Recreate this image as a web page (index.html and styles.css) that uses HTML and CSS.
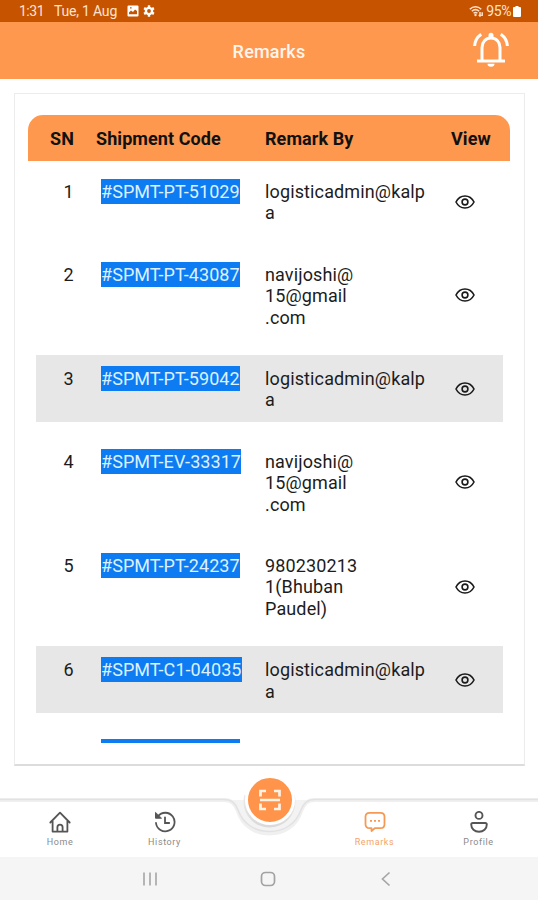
FILE: index.html
```html
<!DOCTYPE html>
<html lang="en">

<head>
    <meta charset="UTF-8">
    <title>Remarks</title>
    <link rel="stylesheet" href="styles.css">
</head>

<body>
    <div class="status-bar">
        <span class="time">1:31</span>
        <span class="date">Tue, 1 Aug</span>
        <svg class="status-picture" width="12" height="12" viewBox="0 0 12 12">
            <path fill="#fff" fill-rule="evenodd" d="M1.5 0.5h9a1 1 0 0 1 1 1v9a1 1 0 0 1-1 1h-9a1 1 0 0 1-1-1v-9a1 1 0 0 1 1-1zM2 9.2h8V6L8 4.6 6 7 4 5.6 2 7.4zM3 2.2v1.4h1.6V2.2z"/>
        </svg>
        <svg class="status-gear" width="12" height="12" viewBox="0 0 12 12">
            <circle cx="6" cy="6" r="3.1" fill="none" stroke="#fff" stroke-width="2.4"/>
            <path stroke="#fff" stroke-width="2.4" d="M6 .3v2M6 9.7v2M1.1 3.1l1.7 1M9.2 7.9l1.7 1M1.1 8.9l1.7-1M9.2 4.1l1.7-1"/>
        </svg>
        <svg class="status-wifi" width="15" height="12" viewBox="0 0 15 12">
            <g fill="none" stroke="#ffe0c8" stroke-width="1.5">
                <path d="M.8 4.2C4 1 9 1 12.2 4.2M2.8 6.3c2.2-2 5.2-2 7.4 0M4.6 8.3c1.1-1 2.7-1 3.8 0"/>
                <path d="M11 7v4M9.8 9.8L11 11l1.2-1.2M13.2 11V7.2"/>
            </g>
            <circle cx="6.5" cy="10" r="1.2" fill="#ffe0c8"/>
        </svg>
        <span class="battery-text">95%</span>
        <svg class="battery" width="8" height="11" viewBox="0 0 8 11">
            <path fill="#fff" d="M2.5 0h3v1H7a1 1 0 0 1 1 1v8a1 1 0 0 1-1 1H1a1 1 0 0 1-1-1V2a1 1 0 0 1 1-1h1.500z"/>
        </svg>
    </div>

    <div class="header">
        <h1>Remarks</h1>
        <svg class="bell" width="38" height="38" viewBox="0 0 38 38">
            <g fill="none" stroke="#fff" stroke-width="3">
                <path d="M10 29V16.500c0-5.500 3.700-9.500 9-9.500s9 4 9 9.500V29"/>
                <path d="M5 30h28" stroke-width="3"/>
                <path d="M2.600 15C3 9.500 5.300 6 9.200 3.300M35.400 15C35 9.500 32.700 6 28.800 3.300" stroke-width="3"/>
            </g>
            <path fill="#fff" d="M16.500 7.500V4.200a2.500 2.500 0 0 1 5 0v3.300zM15.500 32.800h7a3.500 3 0 0 1-7 0z"/>
        </svg>
    </div>

    <div class="card">
        <div class="row table-head">
            <span>SN</span>
            <span>Shipment Code</span>
            <span>Remark By</span>
            <span>View</span>
        </div>
        <div class="table-body">
            <div class="row">
                <span class="sn">1</span>
                <span class="code"><mark>#SPMT-PT-51029</mark></span>
                <span class="by">logisticadmin@kalp<br>a</span>
                <svg class="eye" viewBox="0 0 20 16"><use href="#eye"/></svg>
            </div>
            <div class="row">
                <span class="sn">2</span>
                <span class="code"><mark>#SPMT-PT-43087</mark></span>
                <span class="by">navijoshi@<br>15@gmail<br>.com</span>
                <svg class="eye" viewBox="0 0 20 16"><use href="#eye"/></svg>
            </div>
            <div class="row shaded">
                <span class="sn">3</span>
                <span class="code"><mark>#SPMT-PT-59042</mark></span>
                <span class="by">logisticadmin@kalp<br>a</span>
                <svg class="eye" viewBox="0 0 20 16"><use href="#eye"/></svg>
            </div>
            <div class="row">
                <span class="sn">4</span>
                <span class="code"><mark>#SPMT-EV-33317</mark></span>
                <span class="by">navijoshi@<br>15@gmail<br>.com</span>
                <svg class="eye" viewBox="0 0 20 16"><use href="#eye"/></svg>
            </div>
            <div class="row">
                <span class="sn">5</span>
                <span class="code"><mark>#SPMT-PT-24237</mark></span>
                <span class="by">980230213<br>1(Bhuban<br>Paudel)</span>
                <svg class="eye" viewBox="0 0 20 16"><use href="#eye"/></svg>
            </div>
            <div class="row shaded">
                <span class="sn">6</span>
                <span class="code"><mark>#SPMT-C1-04035</mark></span>
                <span class="by">logisticadmin@kalp<br>a</span>
                <svg class="eye" viewBox="0 0 20 16"><use href="#eye"/></svg>
            </div>
            <!-- next row is cut off by the scroll area -->
            <div class="row">
                <span class="sn"></span>
                <span class="code"><mark class="empty-code"></mark></span>
            </div>
        </div>
    </div>

    <div class="tabs">
        <svg class="tabs-edge" width="538" height="44" viewBox="0 0 538 44">
            <defs>
                <linearGradient id="edge" x1="0" y1="0" x2="0" y2="1">
                    <stop offset="0" stop-color="#f4f4f4"/>
                    <stop offset="1" stop-color="#d9d9d9"/>
                </linearGradient>
            </defs>
            <path fill="#f3f3f3" d="M232 5C235 9 238 10 240 16C245 31 255 38.500 269.500 38.500S294 31 299 16C301 10 304 9 307 5z"/>
            <path fill="#fff" d="M236 0h67v5h-67z"/>
            <path fill="none" stroke="#f0f0f0" stroke-width="4" d="M0 5H224C232 5 235 9 238 16C243 31 255 38.500 269.500 38.500S296 31 301 16C304 9 307 5 315 5H538"/>
            <path fill="none" stroke="#e2e2e2" stroke-width="1.500" d="M0 4.500H224C232 4.500 235 8 238 15C243 29 255 36.500 269.500 36.500S296 29 301 15C304 8 307 4.500 315 4.500H538"/>
            <circle cx="269.500" cy="6.500" r="26" fill="url(#edge)"/>
        </svg>
        <div class="scan">
            <svg width="24" height="24" viewBox="0 0 24 24" fill="none" stroke="#fff3e6" stroke-width="2.700">
                <path d="M2.500 8.500V3H8M16 3h5.500v5.500M21.500 15.500V21H16M8 21H2.500v-5.500M2 12h20"/>
            </svg>
        </div>
        <div class="tab home">
            <svg width="22" height="22" viewBox="0 0 22 22" fill="none" stroke="#555" stroke-width="1.800" stroke-linejoin="round" stroke-linecap="round">
                <path d="M1.300 11.500L11 1.700l9.700 9.800M3.600 10v10.600h14.800V10M8.400 20.400v-4.200a2.600 2.600 0 0 1 5.200 0v4.200"/>
            </svg>
            <span>Home</span>
        </div>
        <div class="tab history">
            <svg width="22" height="22" viewBox="0 0 22 22" fill="none" stroke="#555" stroke-width="1.800" stroke-linecap="round">
                <path d="M4 5.200a9.300 9.300 0 1 1-2 6.800M11 6.300V12h4.200"/>
                <path d="M1.500 1.800v5.400h5.600z" fill="#555" stroke-width="1"/>
            </svg>
            <span>History</span>
        </div>
        <div class="tab remarks">
            <svg width="22" height="22" viewBox="0 0 22 22" fill="none" stroke="#f59a56" stroke-width="1.800" stroke-linejoin="round">
                <path d="M5.500 1.800h11q4 0 4 4v7.400q0 4-4 4h-5.700L7.500 20v-2.800h-2q-4 0-4-4V5.800q0-4 4-4z"/>
                <path d="M6 9.800h2M10 9.800h2M14 9.800h2"/>
            </svg>
            <span>Remarks</span>
        </div>
        <div class="tab profile">
            <svg width="22" height="22" viewBox="0 0 22 22" fill="none" stroke="#555" stroke-width="1.900" stroke-linejoin="round">
                <circle cx="11" cy="4.400" r="3.500"/>
                <path d="M4.800 12h12.400q1.600 0 1.600 1.600c0 4.200-3.400 7.200-7.800 7.200s-7.800-3-7.800-7.200q0-1.600 1.600-1.600z"/>
            </svg>
            <span>Profile</span>
        </div>
    </div>

    <div class="system-bar">
        <svg width="16" height="16" viewBox="0 0 16 16" stroke="#aaa" stroke-width="1.700">
            <path d="M2 1.500v13M8 1.500v13M14 1.500v13"/>
        </svg>
        <svg width="16" height="16" viewBox="0 0 16 16" fill="none" stroke="#a2a2a2" stroke-width="1.700">
            <rect x="1.500" y="1.500" width="13" height="13" rx="4"/>
        </svg>
        <svg width="16" height="16" viewBox="0 0 16 16" fill="none" stroke="#a6a6a6" stroke-width="1.700">
            <path d="M11.500 1.500L4.500 8l7 6.500"/>
        </svg>
    </div>

    <svg class="symbols" width="0" height="0">
        <symbol id="eye" viewBox="0 0 20 16">
            <g fill="none" stroke="#1a1a1a" stroke-width="1.600">
                <path d="M1 8C3 4 6.200 2 10 2s7 2 9 6c-2 4-5.200 6-9 6S3 12 1 8z"/>
                <circle cx="10" cy="8" r="2.900"/>
            </g>
        </symbol>
    </svg>
</body>

</html>
```

FILE: styles.css
```css
* {
    box-sizing: border-box;
}

body {
    margin: 0;
    width: 538px;
    height: 900px;
    overflow: hidden;
    display: flex;
    flex-direction: column;
    background-color: #fff;
    font-family: Roboto, sans-serif;
    color: #1c1c1c;
}

svg {
    display: block;
    flex: none;
}

.symbols {
    position: absolute;
}

.status-bar {
    height: 22px;
    flex: none;
    display: flex;
    align-items: center;
    padding: 0 17px 0 19px;
    background-color: #c65300;
    color: #ffe3cf;
    font-size: 14px;
}

.time {
    width: 35px;
    letter-spacing: -0.5px;
}

.date {
    width: 73px;
    white-space: nowrap;
    letter-spacing: -0.2px;
}

.status-gear {
    margin-left: 4px;
}

.status-wifi {
    margin-left: auto;
}

.battery-text {
    margin: 0 2px 0 2px;
    letter-spacing: -0.4px;
}

.header {
    height: 57px;
    flex: none;
    display: grid;
    grid-template-columns: 1fr auto 1fr;
    align-items: center;
    background-color: #ff984f;
}

.header h1 {
    grid-column: 2;
    margin: 1px 0 0;
    color: #fff5ec;
    font-size: 18px;
    font-weight: 500;
    letter-spacing: 0.2px;
}

.bell {
    justify-self: end;
    margin: 0 28px 2px 0;
}

.card {
    width: 511px;
    height: 673px;
    flex: none;
    margin: 14px 0 0 14px;
    padding: 21px 14px 21px 13px;
    border: 1px solid #ececec;
    border-bottom: 2px solid #dcdcdc;
    display: flex;
    flex-direction: column;
}

.row {
    display: grid;
    grid-template-columns: 65px 164px 164px 74px;
}

.table-head {
    height: 46px;
    flex: none;
    grid-template-columns: 46px 169px 186px auto;
    align-items: center;
    padding: 1px 0 1px 22px;
    border-radius: 15px 15px 0 0;
    background-color: #ff984f;
    color: #111;
    font-size: 18px;
    font-weight: 700;
    letter-spacing: 0.08px;
}

.table-body {
    flex: 1;
    overflow: hidden;
    display: flex;
    flex-direction: column;
    gap: 16px;
    padding: 7px 7px 0 8px;
}

.table-body .row {
    flex: none;
    padding: 13px 0 11px;
    font-size: 18px;
    line-height: 21.4px;
}

.shaded {
    background-color: #e7e7e7;
}

.sn {
    text-align: center;
}

.code {
    letter-spacing: 0.06px;
}

.by {
    letter-spacing: 0.13px;
}

.code mark {
    display: inline-block;
    height: 25px;
    margin-top: -2px;
    padding-top: 2px;
    background-color: #0d7cf2;
    color: #dcf0ff;
    vertical-align: top;
}

.code .empty-code {
    width: 139px;
    margin-top: -3px;
}

.eye {
    width: 20px;
    height: 16px;
    align-self: center;
    margin: 0 0 1px 26px;
}

.tabs {
    position: relative;
    height: 91px;
    flex: none;
    display: grid;
    grid-template-columns: 120px 89px 121px 89px 119px;
    padding-top: 45px;
}

/* curved top line that dips under the scan button */
.tabs-edge {
    position: absolute;
    top: 29px;
    left: 0;
}

.scan {
    position: absolute;
    top: 9px;
    left: 244.500px;
    width: 50px;
    height: 50px;
    display: flex;
    align-items: center;
    justify-content: center;
    border: 3px solid #fff;
    border-radius: 50%;
    background-color: #ff944a;
}

.tab {
    display: flex;
    flex-direction: column;
    align-items: center;
    gap: 4px;
    color: #8a8a8a;
    font-size: 9px;
    line-height: 11px;
    letter-spacing: 0.6px;
}

.remarks {
    grid-column: 4;
    color: #f5a468;
}

.system-bar {
    flex: 1;
    display: flex;
    align-items: center;
    gap: 102px;
    padding-left: 142px;
    background-color: #f5f5f5;
}
```
